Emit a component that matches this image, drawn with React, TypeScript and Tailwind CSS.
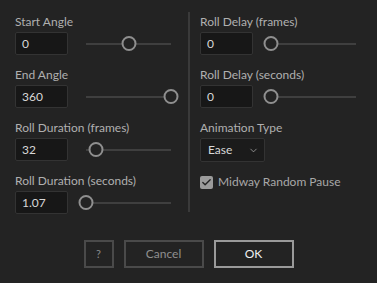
import { Check, ChevronDown } from 'lucide-react';

type Field = { label: string; value: string; pos: number };

const left: Field[] = [
  { label: 'Start Angle', value: '0', pos: 0.5 },
  { label: 'End Angle', value: '360', pos: 1 },
  { label: 'Roll Duration (frames)', value: '32', pos: 0.12 },
  { label: 'Roll Duration (seconds)', value: '1.07', pos: 0 },
];

const right: Field[] = [
  { label: 'Roll Delay (frames)', value: '0', pos: 0 },
  { label: 'Roll Delay (seconds)', value: '0', pos: 0 },
];

function Slider({ pos }: { pos: number }) {
  return (
    <div className="relative h-[23px] w-[85px]">
      <div className="absolute left-0 right-0 top-[11px] h-[2px] bg-[#3f3f3f]" />
      <div
        className="absolute top-[4px] h-[15px] w-[15px] -translate-x-1/2 rounded-full border-2 border-[#8f8f8f] bg-[#232323]"
        style={{ left: `${pos * 100}%` }}
      />
    </div>
  );
}

function Row({ field }: { field: Field }) {
  return (
    <div className="flex flex-col">
      <div className="h-[17px] text-[12px] leading-[14px] text-[#b0b0b0]">{field.label}</div>
      <div className="flex items-center gap-[18px]">
        <div className="flex h-[23px] w-[53px] items-center rounded-[2px] border border-[#333333] bg-[#171717] px-[6px] text-[12px] text-[#d8d8d8]">
          {field.value}
        </div>
        <Slider pos={field.pos} />
      </div>
    </div>
  );
}

export default function App() {
  return (
    <div
      className="flex h-[283px] w-[377px] flex-col bg-[#232323] text-[12px]"
      style={{ fontFamily: 'Lato, "Noto Sans", sans-serif' }}
    >
      <div className="flex pt-[12px]">
        <div className="flex w-[188px] flex-col gap-[13px] pl-[15px] pt-[3px]">
          {left.map((f) => (
            <Row key={f.label} field={f} />
          ))}
        </div>
        <div className="h-[200px] w-[2px] bg-[#3a3a3a]" />
        <div className="flex flex-col gap-[13px] pl-[10px] pt-[3px]">
          {right.map((f) => (
            <Row key={f.label} field={f} />
          ))}
          <div className="flex flex-col">
            <div className="h-[17px] leading-[14px] text-[#b0b0b0]">Animation Type</div>
            <div className="flex h-[24px] w-[65px] items-center justify-between rounded-[2px] border border-[#333333] bg-[#1b1b1b] pl-[7px] pr-[5px] text-[#d8d8d8]">
              <span>Ease</span>
              <ChevronDown className="h-[11px] w-[11px] text-[#bbbbbb]" strokeWidth={1.5} />
            </div>
            <div className="mt-[11px] flex items-center gap-[5px]">
              <div className="flex h-[13px] w-[13px] items-center justify-center rounded-[2px] bg-[#9b9b9b]">
                <Check className="h-[11px] w-[11px] text-[#232323]" strokeWidth={3} />
              </div>
              <span className="text-[#a8a8a8]">Midway Random Pause</span>
            </div>
          </div>
        </div>
      </div>
      <div className="mt-[26px] flex justify-center gap-[10px]">
        <button className="h-[28px] w-[30px] border-2 border-[#4a4a4a] text-[11px] text-[#8a8a8a]">?</button>
        <button className="h-[28px] w-[80px] border-2 border-[#4a4a4a] text-[#8f8f8f]">Cancel</button>
        <button className="h-[28px] w-[80px] border-2 border-[#9a9a9a] text-[#f0f0f0]">OK</button>
      </div>
    </div>
  );
}
